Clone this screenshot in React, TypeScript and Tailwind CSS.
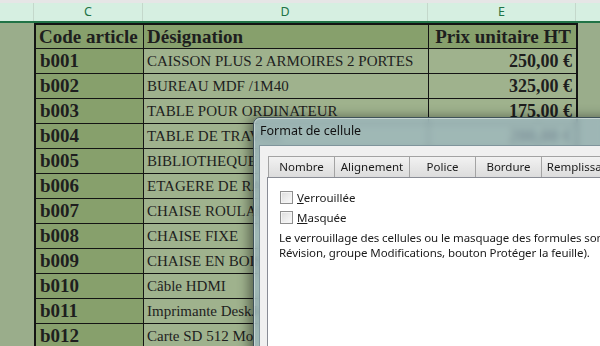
import React from "react";

const rows: [string, string, string][] = [
  ["b001", "CAISSON PLUS 2 ARMOIRES 2 PORTES", "250,00 €"],
  ["b002", "BUREAU MDF /1M40", "325,00 €"],
  ["b003", "TABLE POUR ORDINATEUR", "175,00 €"],
  ["b004", "TABLE DE TRAVAIL", "200,00 €"],
  ["b005", "BIBLIOTHEQUE", "150,00 €"],
  ["b006", "ETAGERE DE RANGEMENT", "95,00 €"],
  ["b007", "CHAISE ROULANTE", "85,00 €"],
  ["b008", "CHAISE FIXE", "45,00 €"],
  ["b009", "CHAISE EN BOIS", "35,00 €"],
  ["b010", "Câble HDMI", "15,00 €"],
  ["b011", "Imprimante DeskJet", "120,00 €"],
  ["b012", "Carte SD 512 Mo", "12,00 €"],
];

const serif = { fontFamily: '"Liberation Serif", "DejaVu Serif", serif' };
const ui = { fontFamily: '"Noto Sans", "Open Sans", sans-serif' };

function Checkbox() {
  return (
    <span className="inline-block w-[13px] h-[13px] border border-[#8f8f8f] bg-gradient-to-br from-[#dcdcdc] to-[#fbfbfb] shadow-[inset_0_0_0_1px_#f4f4f4]" />
  );
}

export default function App() {
  return (
    <div className="relative w-[600px] h-[346px] overflow-hidden bg-[#9aad8b]">
      {/* column header bar */}
      <div className="h-[3px] bg-[#e6e6e6]" />
      <div className="flex h-[18px] bg-[#d6efe1] text-[12.5px] text-[#217346]" style={ui}>
        <div className="w-[34px] border-r border-[#c4d8cb]" />
        <div className="w-[109px] border-r border-[#c4d8cb] flex items-center justify-center">C</div>
        <div className="w-[285px] border-r border-[#c4d8cb] flex items-center justify-center">D</div>
        <div className="w-[148px] border-r border-[#c4d8cb] flex items-center justify-center">E</div>
        <div className="flex-1" />
      </div>
      <div className="h-[2px] bg-[#217346]" />

      {/* sheet */}
      <div className="flex">
        <div className="w-[34px] shrink-0" />
        <div className="w-[544px] border-2 border-b-0 border-[#141414] text-[#1e1e1e]" style={serif}>
          <div className="grid grid-cols-[108px_285px_147px] h-[24px] border-b border-[#141414] bg-[#87a06c] font-bold text-[19px] leading-[24px]">
            <div className="border-r border-[#141414] pl-[3px] whitespace-nowrap overflow-hidden">Code article</div>
            <div className="border-r border-[#141414] pl-[3px]">Désignation</div>
            <div className="text-right pr-[5px] whitespace-nowrap">Prix unitaire HT</div>
          </div>
          {rows.map(([code, name, price]) => (
            <div key={code} className="grid grid-cols-[108px_285px_147px] h-[25px] border-b border-[#141414]">
              <div className="bg-[#87a06c] border-r border-[#141414] pl-[4px] font-bold text-[19px] leading-[24px]">{code}</div>
              <div className="bg-[#9fb28d] border-r border-[#141414] pl-[3px] text-[15px] leading-[24px] whitespace-nowrap overflow-hidden">{name}</div>
              <div className="bg-[#9fb28d] text-right pr-[4px] font-bold text-[18px] leading-[24px]">{price}</div>
            </div>
          ))}
        </div>
        <div className="flex-1" />
      </div>

      {/* dialog */}
      <div className="absolute left-[253px] top-[117px] w-[380px] h-[260px] rounded-tl-[7px] border border-[#3f5259] bg-[#9fb9c3]/75 backdrop-blur-[3px] shadow-[-4px_0_12px_rgba(0,0,0,0.45)]" style={ui}>
        <div className="absolute inset-0 rounded-tl-[6px] border border-white/40 pointer-events-none" />
        <div className="absolute left-[6px] top-[4px] text-[12.5px] text-[#111]">Format de cellule</div>
        <div className="absolute left-[5px] top-[27px] right-0 bottom-0 bg-[#f0f0f0] border border-[#7f949b] overflow-hidden">
          {/* tabs */}
          <div className="absolute left-[8px] top-[10px] flex h-[21px] text-[11.5px] text-[#1a1a1a]">
            {[
              ["Nombre", 67],
              ["Alignement", 76],
              ["Police", 67],
              ["Bordure", 67],
              ["Remplissage", 80],
            ].map(([label, w]) => (
              <div
                key={label as string}
                className="flex items-end justify-center pb-[2px] border border-b-0 border-[#a3a3a3] -ml-px first:ml-0 bg-gradient-to-b from-[#f2f2f2] to-[#dcdcdc] whitespace-nowrap overflow-hidden"
                style={{ width: w as number }}
              >
                {label}
              </div>
            ))}
          </div>
          {/* panel */}
          <div className="absolute left-[7px] top-[31px] right-0 bottom-0 bg-white border border-[#898c95] text-[11.5px] text-[#1a1a1a] overflow-hidden">
            <div className="pl-[12px] pt-[13px] flex flex-col gap-[7px]">
              <div className="flex items-center gap-[4px] h-[13px]">
                <Checkbox />
                <span><span className="underline">V</span>errouillée</span>
              </div>
              <div className="flex items-center gap-[4px] h-[13px]">
                <Checkbox />
                <span><span className="underline">M</span>asquée</span>
              </div>
            </div>
            <div className="pl-[11px] pt-[6px] leading-[15px] whitespace-nowrap tracking-[-0.1px]">
              <div>Le verrouillage des cellules ou le masquage des formules sont sans effet</div>
              <div>Révision, groupe Modifications, bouton Protéger la feuille).</div>
            </div>
          </div>
        </div>
      </div>
    </div>
  );
}
